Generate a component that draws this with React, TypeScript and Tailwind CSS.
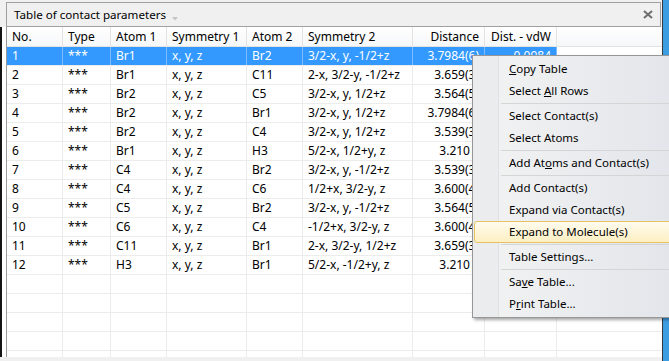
import React from "react";

const FONT = { fontFamily: '"Noto Sans", "Open Sans", Arial, sans-serif' };

const colW = [
  "w-[56px]",
  "w-[48px]",
  "w-[56px]",
  "w-[80px]",
  "w-[56px]",
  "w-[110px]",
  "w-[72px]",
  "w-[72px]",
];
const headers = ["No.", "Type", "Atom 1", "Symmetry 1", "Atom 2", "Symmetry 2", "Distance", "Dist. - vdW"];
const rightAligned = [false, false, false, false, false, false, true, true];

const rows: string[][] = [
  ["1", "***", "Br1", "x, y, z", "Br2", "3/2-x, y, -1/2+z", "3.7984(6)", "0.0984"],
  ["2", "***", "Br1", "x, y, z", "C11", "2-x, 3/2-y, -1/2+z", "3.659(3)", ""],
  ["3", "***", "Br2", "x, y, z", "C5", "3/2-x, y, 1/2+z", "3.564(5)", ""],
  ["4", "***", "Br2", "x, y, z", "Br1", "3/2-x, y, 1/2+z", "3.7984(6)", ""],
  ["5", "***", "Br2", "x, y, z", "C4", "3/2-x, y, 1/2+z", "3.539(3)", ""],
  ["6", "***", "Br1", "x, y, z", "H3", "5/2-x, 1/2+y, z", "3.210", ""],
  ["7", "***", "C4", "x, y, z", "Br2", "3/2-x, y, -1/2+z", "3.539(3)", ""],
  ["8", "***", "C4", "x, y, z", "C6", "1/2+x, 3/2-y, z", "3.600(4)", ""],
  ["9", "***", "C5", "x, y, z", "Br2", "3/2-x, y, -1/2+z", "3.564(5)", ""],
  ["10", "***", "C6", "x, y, z", "C4", "-1/2+x, 3/2-y, z", "3.600(4)", ""],
  ["11", "***", "C11", "x, y, z", "Br1", "2-x, 3/2-y, 1/2+z", "3.659(3)", ""],
  ["12", "***", "H3", "x, y, z", "Br1", "5/2-x, -1/2+y, z", "3.210", ""],
];

function Row({ cells, selected }: { cells: string[]; selected?: boolean }) {
  return (
    <div className="flex h-[19px] border-b border-[#ececec] shrink-0">
      {colW.map((w, i) => {
        const v = cells[i] ?? "";
        const padded = i === 6 && v !== "" && !v.includes("(");
        return (
          <div
            key={i}
            className={`${w} shrink-0 h-full border-r px-[5px] leading-[18px] whitespace-nowrap overflow-hidden ${
              rightAligned[i] ? "text-right" : "text-left"
            } ${selected ? "bg-[#3399ff] text-white border-[#7cbcff]" : "text-black border-[#ececec]"}`}
          >
            {v}
            {padded && <span className="inline-block w-[9px]" />}
          </div>
        );
      })}
      <div className="flex-1" />
    </div>
  );
}

function Item({ children, hot }: { children: React.ReactNode; hot?: boolean }) {
  if (hot) {
    return (
      <div className="h-[22px] ml-[1px] mr-[2px] flex items-center pl-[34px] border border-[#e5c365] rounded-[3px] bg-gradient-to-b from-[#fffbee] to-[#fdefc2] text-black">
        {children}
      </div>
    );
  }
  return <div className="h-[22px] flex items-center pl-[36px] text-black">{children}</div>;
}

function Sep() {
  return (
    <div className="h-[3px] flex items-center pl-[28px]">
      <div className="h-px flex-1 bg-[#d5d5d5]" />
    </div>
  );
}

export default function App() {
  return (
    <div className="w-[669px] h-[361px] relative overflow-hidden bg-[#f0f0f0] flex text-[12px]" style={FONT}>
      <div className="w-[662px] flex flex-col">
        {/* Title bar */}
        <div className="h-[27px] pl-[6px] pt-[2px] pr-[1px] shrink-0">
          <div className="h-[25px] border border-[#a0a0a0] bg-[#f0f0f0] flex items-center pl-[7px] pr-[6px] relative">
            <span className="text-black leading-none text-[11.6px]">Table of contact parameters</span>
            <svg width="6" height="4" viewBox="0 0 6 4" className="ml-[6px] mt-[9px]">
              <path d="M0 0 L6 0 L3 3.5 Z" fill="#c4c4c4" />
            </svg>
            <div className="flex-1" />
            <svg width="10" height="9" viewBox="0 0 10 9" className="mr-[1px]">
              <path d="M1 1 L9 8 M9 1 L1 8" stroke="#6e6e6e" strokeWidth="2" />
            </svg>
          </div>
        </div>
        {/* Body */}
        <div className="h-[330px] flex shrink-0">
          <div className="w-[2px] bg-[#141414]" />
          <div className="w-[4px] bg-white" />
          <div className="flex-1 border-l border-[#9a9a9a] bg-white overflow-hidden flex flex-col">
            <div className="flex h-[20px] border-b border-[#e3e3e3] bg-gradient-to-b from-white to-[#f6f7f9] shrink-0">
              {colW.map((w, i) => (
                <div
                  key={i}
                  className={`${w} shrink-0 h-full border-r border-[#e3e3e3] px-[5px] leading-[19px] whitespace-nowrap overflow-hidden text-black ${
                    rightAligned[i] ? "text-right" : "text-left"
                  }`}
                >
                  {headers[i]}
                </div>
              ))}
              <div className="flex-1" />
            </div>
            {rows.map((r, i) => (
              <Row key={i} cells={r} selected={i === 0} />
            ))}
            {[0, 1, 2, 3, 4].map((i) => (
              <Row key={"e" + i} cells={[]} />
            ))}
          </div>
        </div>
        <div className="h-[4px] bg-[#f0f0f0] shrink-0" />
      </div>
      <div className="w-[1px] bg-[#3a3a3a]" />
      <div className="w-[6px] bg-[#3d9de2]" />

      {/* Context menu */}
      <div className="absolute left-[472px] top-[55px] w-[205px] border border-[#979797] bg-gradient-to-r from-[#f3f3f3] to-[#e2e5ea] shadow-[2px_2px_3px_rgba(0,0,0,0.35)] py-[2px] text-[11.5px]">
        <div className="absolute left-0 top-0 bottom-0 w-[26px] bg-[#eaecee] border-r border-[#e0e1e2]" />
        <div className="relative">
          <Item>
            <span><span className="underline">C</span>opy Table</span>
          </Item>
          <Item>
            <span>Select <span className="underline">A</span>ll Rows</span>
          </Item>
          <Sep />
          <Item>Select Contact(s)</Item>
          <Item>Select Atoms</Item>
          <Sep />
          <Item>
            <span>Add At<span className="underline">o</span>ms and Contact(s)</span>
          </Item>
          <Sep />
          <Item>Add Contact(s)</Item>
          <Item>Expand via Contact(s)</Item>
          <Item hot>Expand to Molecule(s)</Item>
          <Sep />
          <Item>Table Settings...</Item>
          <Sep />
          <Item>
            <span>Sa<span className="underline">v</span>e Table...</span>
          </Item>
          <Item>
            <span>P<span className="underline">r</span>int Table...</span>
          </Item>
        </div>
      </div>
    </div>
  );
}
